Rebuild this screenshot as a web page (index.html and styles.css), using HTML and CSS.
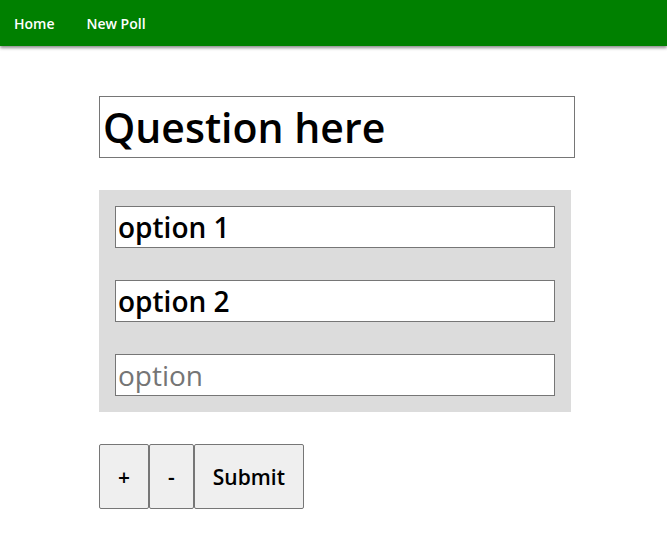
FILE: index.html
```html
<!DOCTYPE html>
<html>
<head>
<meta charset="utf-8">
<link rel="stylesheet" href="styles.css">
</head>
<body>
<nav class="nav">
  <a class="nav-link" href="#">Home</a>
  <a class="nav-link" href="#">New Poll</a>
</nav>
<main class="main">
  <input class="question" type="text" value="Question here">
  <div class="options">
    <input class="option" type="text" value="option 1">
    <input class="option" type="text" value="option 2">
    <input class="option" type="text" placeholder="option">
  </div>
  <div class="buttons">
    <button class="btn">+</button>
    <button class="btn">-</button>
    <button class="btn btn-submit">Submit</button>
  </div>
</main>
</body>
</html>
```
FILE: styles.css
```css
html, body {
  margin: 0;
  padding: 0;
  background: #fff;
  font-family: "Open Sans", sans-serif;
}
.nav {
  height: 46px;
  background: #008000;
  display: flex;
  align-items: center;
  padding-left: 14px;
  gap: 32px;
  box-shadow: 0 2px 3px rgba(0,0,0,0.45);
}
.nav-link {
  color: #fff;
  text-decoration: none;
  font-weight: 600;
  font-size: 14px;
}
.main {
  padding: 50px 0 0 99px;
  display: flex;
  flex-direction: column;
  align-items: flex-start;
}
.question {
  box-sizing: border-box;
  width: 476px;
  height: 62px;
  border: 1px solid #767676;
  padding: 0 3px;
  font-family: "Open Sans", sans-serif;
  font-size: 41px;
  font-weight: 600;
  color: #000;
  outline: none;
}
.options {
  margin-top: 32px;
  background: #dcdcdc;
  padding: 16px;
  display: flex;
  flex-direction: column;
  gap: 32px;
  width: 440px;
}
.option {
  box-sizing: border-box;
  width: 440px;
  height: 42px;
  border: 1px solid #767676;
  padding: 0 2px;
  font-family: "Open Sans", sans-serif;
  font-size: 28px;
  font-weight: 600;
  color: #000;
  outline: none;
}
.option::placeholder {
  color: #757575;
  font-weight: 500;
}
.buttons {
  margin-top: 32px;
  display: flex;
}
.btn {
  height: 65px;
  background: #efefef;
  border: 1px solid #767676;
  border-radius: 2px;
  font-family: "Open Sans", sans-serif;
  font-size: 21px;
  font-weight: 600;
  color: #000;
  padding: 0 18px;
}
```
